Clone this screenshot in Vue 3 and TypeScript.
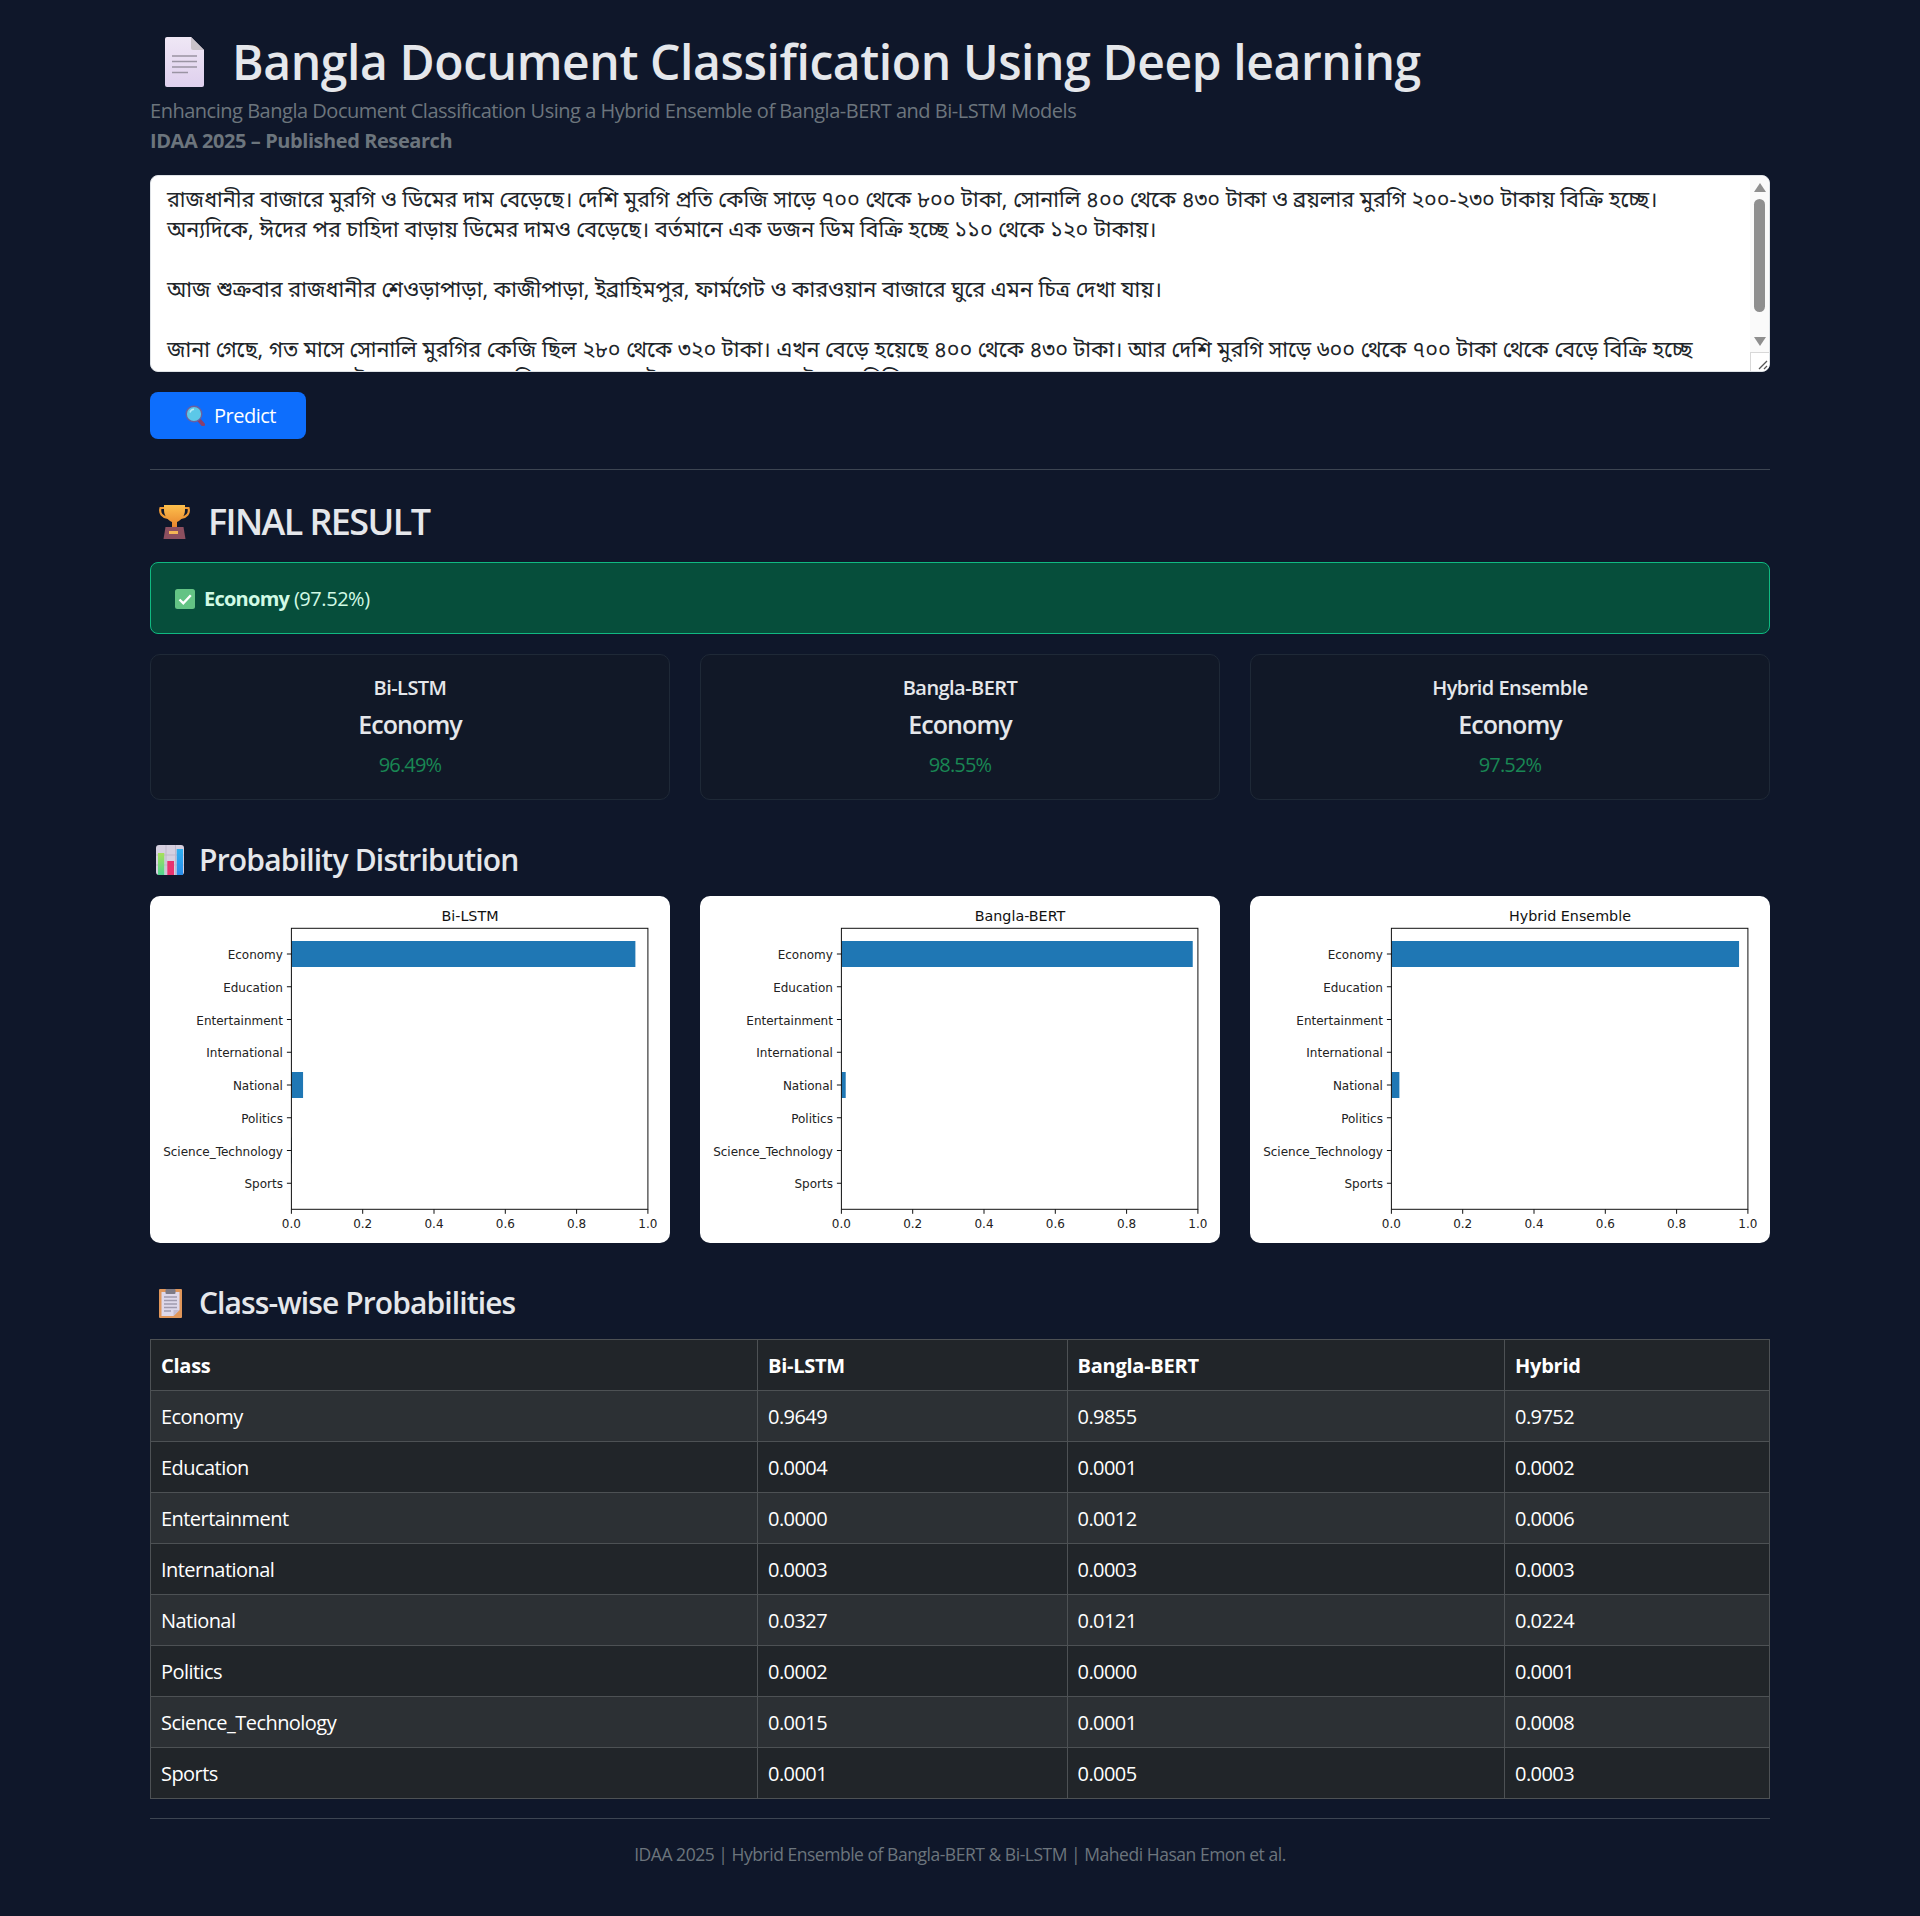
<script setup lang="ts">
import { ref } from 'vue'

interface Model {
  name: string
  label: string
  conf: string
  probs: number[]
}

const text = ref(
  'রাজধানীর বাজারে মুরগি ও ডিমের দাম বেড়েছে। দেশি মুরগি প্রতি কেজি সাড়ে ৭০০ থেকে ৮০০ টাকা, সোনালি ৪০০ থেকে ৪৩০ টাকা ও ব্রয়লার মুরগি ২০০-২৩০ টাকায় বিক্রি হচ্ছে। অন্যদিকে, ঈদের পর চাহিদা বাড়ায় ডিমের দামও বেড়েছে। বর্তমানে এক ডজন ডিম বিক্রি হচ্ছে ১১০ থেকে ১২০ টাকায়।\n\nআজ শুক্রবার রাজধানীর শেওড়াপাড়া, কাজীপাড়া, ইব্রাহিমপুর, ফার্মগেট ও কারওয়ান বাজারে ঘুরে এমন চিত্র দেখা যায়।\n\nজানা গেছে, গত মাসে সোনালি মুরগির কেজি ছিল ২৮০ থেকে ৩২০ টাকা। এখন বেড়ে হয়েছে ৪০০ থেকে ৪৩০ টাকা। আর দেশি মুরগি সাড়ে ৬০০ থেকে ৭০০ টাকা থেকে বেড়ে বিক্রি হচ্ছে সাড়ে ৭০০ থেকে ৮০০ টাকায়। ব্রয়লার মুরগি আগের মতোই ২০০ থেকে ২৩০ টাকায় বিক্রি হচ্ছে।'
)

const classes = ['Economy', 'Education', 'Entertainment', 'International', 'National', 'Politics', 'Science_Technology', 'Sports']

const models: Model[] = [
  { name: 'Bi-LSTM', label: 'Economy', conf: '96.49%', probs: [0.9649, 0.0004, 0, 0.0003, 0.0327, 0.0002, 0.0015, 0.0001] },
  { name: 'Bangla-BERT', label: 'Economy', conf: '98.55%', probs: [0.9855, 0.0001, 0.0012, 0.0003, 0.0121, 0, 0.0001, 0.0005] },
  { name: 'Hybrid Ensemble', label: 'Economy', conf: '97.52%', probs: [0.9752, 0.0002, 0.0006, 0.0003, 0.0224, 0.0001, 0.0008, 0.0003] },
]

const xTicks = [0, 0.2, 0.4, 0.6, 0.8, 1]
const axisW = 356.5
const axisH = 281
const tickY = (i: number) => 25.7 + i * 32.75
</script>

<template>
  <div class="page">
    <h1 class="title">
      <svg class="doc-icon" viewBox="0 0 39 50">
        <defs>
          <linearGradient id="docFill" x1="0" y1="0" x2="0" y2="1">
            <stop offset="0" stop-color="#efe7f5" />
            <stop offset="1" stop-color="#dfd0ee" />
          </linearGradient>
        </defs>
        <path d="M2 0h24l13 13v35a2 2 0 0 1-2 2H2a2 2 0 0 1-2-2V2a2 2 0 0 1 2-2z" fill="url(#docFill)" />
        <path d="M26 0l13 13H28a2 2 0 0 1-2-2z" fill="#c9c2c9" />
        <path d="M7 19h25M7 24.500h25M7 30h25M7 35.500h16" stroke="#9a94a3" stroke-width="1.700" />
      </svg>
      <span>Bangla Document Classification Using Deep learning</span>
    </h1>
    <p class="subtitle">Enhancing Bangla Document Classification Using a Hybrid Ensemble of Bangla-BERT and Bi-LSTM Models</p>
    <p class="venue">IDAA 2025 – Published Research</p>

    <div class="input-wrap">
      <textarea v-model="text" class="input" rows="6" spellcheck="false"></textarea>
      <div class="scrollbar">
        <span class="arrow arrow-up"></span>
        <span class="thumb"></span>
        <span class="arrow arrow-down"></span>
        <span class="grip">
          <svg viewBox="0 0 18 18" width="18" height="18">
            <path d="M8 16L16 8M13 16L16 13" stroke="#555" stroke-width="1.300" />
          </svg>
        </span>
      </div>
    </div>

    <button class="predict" type="button">
      <svg class="btn-icon" viewBox="0 0 20 21">
        <path d="M14 15l4 4.500" stroke="#8a3f6d" stroke-width="4" stroke-linecap="round" />
        <circle cx="9" cy="9" r="7.800" fill="#5cc8e8" stroke="#6a5fa0" stroke-width="1.400" />
        <path d="M5 7.500a4.500 4.500 0 0 1 4-3.300" fill="none" stroke="#b5ecf8" stroke-width="1.400" />
      </svg>
      Predict
    </button>

    <hr class="rule" />

    <h2 class="result-head">
      <svg class="trophy" viewBox="0 0 31 34">
        <defs>
          <linearGradient id="cupFill" x1="0" y1="0" x2="0" y2="1">
            <stop offset="0" stop-color="#fdc04d" />
            <stop offset="1" stop-color="#e8852d" />
          </linearGradient>
        </defs>
        <path d="M6 3H1.500C0 8.500 3.500 12 9 13M25 3h4.500C31 8.500 27.500 12 22 13" fill="none" stroke="#f09a35" stroke-width="2.200" />
        <path d="M5 0h21v5c0 6-4 10-8 12v5h-5v-5c-4-2-8-6-8-12z" fill="url(#cupFill)" />
        <path d="M6.500 22h18l2 12h-22z" fill="#8c4f5f" />
        <rect x="10" y="26" width="9" height="3" fill="#f4b555" />
      </svg>
      <span>FINAL RESULT</span>
    </h2>

    <div class="alert-result">
      <svg class="check" viewBox="0 0 20 20">
        <rect width="20" height="20" rx="2.500" fill="#63c384" />
        <path d="M4.500 10.500l3.800 3.800 7.500-8" fill="none" stroke="#fff" stroke-width="2.400" />
      </svg>
      <span><strong>Economy</strong> (97.52%)</span>
    </div>

    <div class="grid">
      <div v-for="m in models" :key="m.name" class="model-card">
        <div class="model-name">{{ m.name }}</div>
        <div class="model-label">{{ m.label }}</div>
        <div class="model-conf">{{ m.conf }}</div>
      </div>
    </div>

    <h3 class="section-head prob-head">
      <svg class="sec-icon" viewBox="0 0 28 30">
        <defs>
          <linearGradient id="greenBar" x1="0" y1="0" x2="0" y2="1">
            <stop offset="0" stop-color="#a8e05a" />
            <stop offset="1" stop-color="#4fd48f" />
          </linearGradient>
          <linearGradient id="blueBar" x1="0" y1="0" x2="0" y2="1">
            <stop offset="0" stop-color="#2fb0f0" />
            <stop offset="1" stop-color="#2a8cea" />
          </linearGradient>
        </defs>
        <rect width="28" height="30" rx="3" fill="#d6d0e0" />
        <path d="M0 10h28M0 20h28M10 0v30M19.500 0v30" stroke="#bfb8cc" stroke-width="1" />
        <rect x="2" y="8" width="6.300" height="22" fill="url(#greenBar)" />
        <rect x="11.300" y="16" width="6.700" height="14" fill="#e8336f" />
        <rect x="20.700" y="4" width="6.300" height="26" fill="url(#blueBar)" />
      </svg>
      <span>Probability Distribution</span>
    </h3>

    <div class="grid">
      <div v-for="m in models" :key="m.name" class="chart-card">
        <svg class="chart" viewBox="0 0 520 347">
          <text x="320" y="24.500" class="chart-title" text-anchor="middle">{{ m.name }}</text>
          <g transform="translate(141.400 32.300)">
            <rect
              v-for="(p, i) in m.probs"
              :key="i"
              x="0"
              :y="tickY(i) - 13"
              :width="p * axisW"
              height="26"
              fill="#1f77b4"
            />
            <rect x="0" y="0" :width="axisW" :height="axisH" fill="none" stroke="#111" stroke-width="1" />
            <g v-for="(c, i) in classes" :key="c">
              <line x1="-4.500" x2="0" :y1="tickY(i)" :y2="tickY(i)" stroke="#111" stroke-width="1" />
              <text x="-8.500" :y="tickY(i) + 5.200" class="tick" text-anchor="end">{{ c }}</text>
            </g>
            <g v-for="t in xTicks" :key="t">
              <line :x1="t * axisW" :x2="t * axisW" :y1="axisH" :y2="axisH + 4.500" stroke="#111" stroke-width="1" />
              <text :x="t * axisW" :y="axisH + 18.500" class="tick" text-anchor="middle">{{ t.toFixed(1) }}</text>
            </g>
          </g>
        </svg>
      </div>
    </div>

    <h3 class="section-head table-head">
      <svg class="sec-icon clip" viewBox="0 0 23 29">
        <rect width="23" height="29" rx="1" fill="#e0965a" />
        <path d="M2.500 3h18v18l-6 6h-12z" fill="#ded8ea" />
        <path d="M14.500 27l6-6h-6z" fill="#c4bcd2" />
        <rect x="6.500" y="0" width="10" height="5" rx="1" fill="#7d7a86" />
        <path d="M5 8h13M5 11.500h13M5 15h13M5 18.500h13M5 22h7" stroke="#a09aae" stroke-width="1.300" />
      </svg>
      <span>Class-wise Probabilities</span>
    </h3>

    <table class="probs">
      <colgroup>
        <col class="col-class" />
        <col class="col-lstm" />
        <col class="col-bert" />
        <col />
      </colgroup>
      <thead>
        <tr>
          <th>Class</th>
          <th>Bi-LSTM</th>
          <th>Bangla-BERT</th>
          <th>Hybrid</th>
        </tr>
      </thead>
      <tbody>
        <tr v-for="(c, i) in classes" :key="c">
          <td>{{ c }}</td>
          <td v-for="m in models" :key="m.name">{{ m.probs[i].toFixed(4) }}</td>
        </tr>
      </tbody>
    </table>

    <hr class="rule footer-rule" />
    <p class="footer">IDAA 2025 | Hybrid Ensemble of Bangla-BERT &amp; Bi-LSTM | Mahedi Hasan Emon et al.</p>
  </div>
</template>

<style>
body {
  margin: 0;
  background: #0f172a;
}
</style>

<style scoped>
.page {
  box-sizing: border-box;
  width: 1620px;
  height: 1916px;
  margin: 0 auto;
  padding-top: 30px;
  color: #e5e7eb;
  font-family: "Open Sans", "Noto Sans", sans-serif;
  font-size: 20px;
  line-height: 30px;
}
.title {
  display: flex;
  align-items: center;
  height: 64px;
  margin: 0;
  padding-left: 15px;
  gap: 28px;
  font-size: 48px;
  font-weight: 600;
  letter-spacing: -0.4px;
  line-height: 64px;
  white-space: nowrap;
}
.doc-icon {
  width: 39px;
  height: 50px;
  flex: none;
}
.subtitle {
  margin: 2px 0 0;
  height: 30px;
  color: #6c757d;
  letter-spacing: -0.48px;
}
.venue {
  margin: 0;
  height: 30px;
  color: #6c757d;
  font-weight: 700;
  letter-spacing: -0.43px;
}
.input-wrap {
  position: relative;
  height: 197px;
  margin-top: 19px;
}
.input {
  display: block;
  box-sizing: border-box;
  width: 100%;
  height: 197px;
  padding: 11px 33px 8px 16px;
  border: 1px solid #dee2e6;
  border-radius: 8px;
  background: #fff;
  color: #212529;
  font-family: "Noto Sans Bengali", "Lohit Bengali", "Noto Sans", sans-serif;
  font-size: 21.600px;
  line-height: 30px;
  outline: none;
  resize: none;
  overflow: hidden;
}
.scrollbar {
  position: absolute;
  top: 1px;
  right: 1px;
  bottom: 1px;
  width: 19px;
  display: flex;
  flex-direction: column;
  align-items: center;
  border-radius: 0 7px 7px 0;
  background: #fafafa;
}
.arrow {
  flex: none;
  width: 0;
  height: 0;
  border-left: 6.500px solid transparent;
  border-right: 6.500px solid transparent;
}
.arrow-up {
  margin-top: 7px;
  border-bottom: 9px solid #8f8f8f;
}
.thumb {
  flex: none;
  width: 11px;
  height: 113px;
  margin-top: 7px;
  border-radius: 6px;
  background: #8f8f8f;
}
.arrow-down {
  margin-top: 25px;
  border-top: 9px solid #8f8f8f;
}
.grip {
  display: block;
  box-sizing: border-box;
  width: 19px;
  height: 19px;
  margin-top: auto;
  border-top: 1px solid #d8d8d8;
  border-left: 1px solid #d8d8d8;
  background: #fff;
  border-bottom-right-radius: 7px;
}
.grip svg {
  display: block;
}
.predict {
  display: flex;
  align-items: center;
  gap: 9px;
  box-sizing: border-box;
  width: 156px;
  height: 47px;
  margin-top: 20px;
  padding: 0 0 0 35px;
  border: none;
  border-radius: 8px;
  background: #0d6efd;
  color: #fff;
  font: inherit;
  letter-spacing: -0.5px;
}
.btn-icon {
  width: 20px;
  height: 21px;
  flex: none;
}
.rule {
  height: 1px;
  margin: 30px 0 0;
  border: none;
  background: #3d4552;
}
.result-head {
  display: flex;
  align-items: center;
  gap: 18px;
  height: 40px;
  margin: 32px 0 0;
  padding-left: 9px;
  font-size: 36px;
  font-weight: 600;
  letter-spacing: -1.600px;
  line-height: 40px;
}
.trophy {
  width: 31px;
  height: 34px;
  flex: none;
}
.alert-result {
  display: flex;
  align-items: center;
  gap: 9px;
  box-sizing: border-box;
  height: 72px;
  margin-top: 20px;
  padding: 2px 0 0 24px;
  border: 1px solid #10b981;
  border-radius: 8px;
  background: #064e3b;
  color: #d1fae5;
  letter-spacing: -0.45px;
}
.alert-result strong {
  letter-spacing: -0.75px;
}
.check {
  width: 20px;
  height: 20px;
  flex: none;
}
.grid {
  display: grid;
  grid-template-columns: repeat(3, 1fr);
  gap: 30px;
}
.alert-result + .grid {
  margin-top: 20px;
}
.model-card {
  box-sizing: border-box;
  height: 146px;
  padding-top: 18px;
  border: 1px solid #1f2937;
  border-radius: 10px;
  background: #111827;
  text-align: center;
}
.model-name {
  height: 30px;
  font-weight: 600;
  letter-spacing: -0.55px;
}
.model-label {
  height: 42px;
  font-size: 25px;
  font-weight: 600;
  letter-spacing: -0.9px;
  line-height: 42px;
}
.model-conf {
  height: 30px;
  margin-top: 5px;
  color: #198754;
  letter-spacing: -0.8px;
}
.section-head {
  display: flex;
  align-items: center;
  height: 36px;
  margin: 0;
  font-size: 30px;
  font-weight: 600;
  letter-spacing: -0.8px;
  line-height: 36px;
}
.prob-head {
  gap: 15px;
  margin-top: 42px;
  padding-left: 6px;
  margin-bottom: 18px;
}
.table-head {
  gap: 17px;
  margin-top: 42px;
  padding-left: 9px;
  margin-bottom: 18px;
  letter-spacing: -0.9px;
}
.sec-icon {
  width: 28px;
  height: 30px;
  flex: none;
}
.sec-icon.clip {
  width: 23px;
  height: 29px;
}
.chart-card {
  height: 347px;
  border-radius: 10px;
  background: #fff;
  overflow: hidden;
}
.chart {
  display: block;
  width: 520px;
  height: 347px;
}
.chart-title {
  font-family: "DejaVu Sans", sans-serif;
  font-size: 14.300px;
  fill: #111;
}
.tick {
  font-family: "DejaVu Sans", sans-serif;
  font-size: 12px;
  fill: #222;
}
.probs {
  width: 100%;
  border-collapse: collapse;
  table-layout: fixed;
  color: #fff;
  letter-spacing: -0.55px;
}
.col-class {
  width: 607px;
}
.col-lstm {
  width: 309.500px;
}
.col-bert {
  width: 437.500px;
}
.probs th,
.probs td {
  box-sizing: border-box;
  height: 51px;
  padding: 11px 10px 9px;
  border: 1px solid #4d5154;
  text-align: left;
  background: #212529;
}
.probs th {
  letter-spacing: -0.25px;
}
.probs tbody tr:nth-child(odd) td {
  background: #2c3034;
}
.footer-rule {
  margin-top: 19px;
}
.footer {
  margin: 20px 0 0;
  color: #6c757d;
  font-size: 17.500px;
  letter-spacing: -0.47px;
  text-align: center;
}
</style>
